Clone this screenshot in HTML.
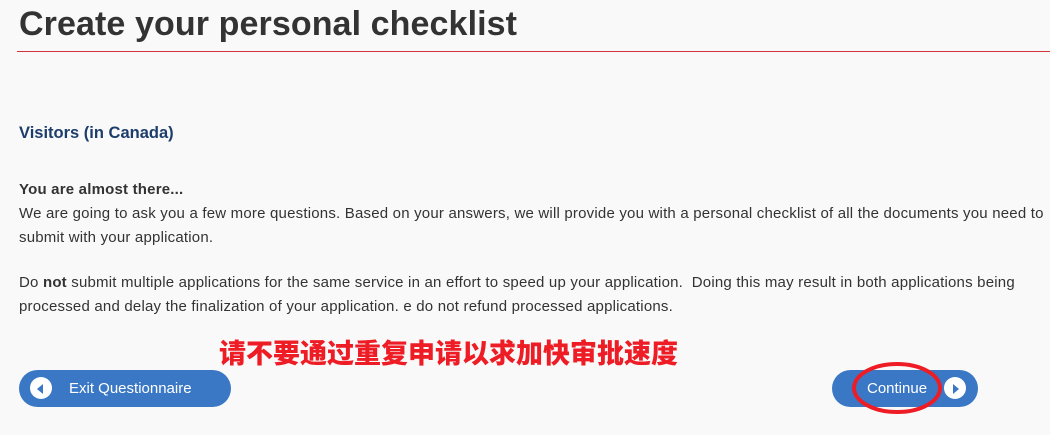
<!DOCTYPE html>
<html><head><meta charset="utf-8"><style>
body{margin:0;background:#f9f9f9;width:1050px;height:435px;overflow:hidden;font-family:"Liberation Sans",Arial,sans-serif;color:#333;position:relative}
h1{position:absolute;left:19px;top:5px;margin:0;font-size:34px;font-weight:bold;color:#333;letter-spacing:0.1px}
.rule{position:absolute;left:17px;top:51px;width:1033px;height:1px;background:#d0333b}
h2{position:absolute;left:19px;top:124px;margin:0;font-size:16.5px;color:#1c3d6b;font-weight:bold}
.p{position:absolute;left:19px;font-size:15px;line-height:24px;color:#333;width:1030px;letter-spacing:0.2px}
.cn{position:absolute;left:219px;top:333px;font-family:"Noto Sans CJK SC",sans-serif;font-weight:900;font-size:27px;color:#ee1c25;line-height:38px;white-space:nowrap}
.btn{position:absolute;top:370px;height:37px;border-radius:19px;background:#3a78c5;color:#fff;font-size:15px;line-height:37px}
.ic{position:absolute;top:7px;width:22px;height:22px;border-radius:50%;background:#fff}
</style></head><body>
<h1>Create your personal checklist</h1>
<div class="rule"></div>
<h2>Visitors (in Canada)</h2>
<div class="p" style="top:178px"><b>You are almost there...</b><br>We are going to ask you a few more questions. Based on your answers, we will provide you with a personal checklist of all the documents you need to submit with your application.</div>
<div class="p" style="top:271px">Do <b>not</b> submit multiple applications for the same service in an effort to speed up your application.&nbsp; Doing this may result in both applications being processed and delay the finalization of your application. e do not refund processed applications.</div>
<div class="cn">请不要通过重复申请以求加快审批速度</div>
<div class="btn" style="left:19px;width:212px"><div class="ic" style="left:11px"><svg width="22" height="22"><path d="M13 6 L7 11 L13 16Z" fill="#3a78c5"/></svg></div><span style="position:absolute;left:50px">Exit Questionnaire</span></div>
<div class="btn" style="left:832px;width:146px"><span style="position:absolute;left:35px">Continue</span><div class="ic" style="left:112px"><svg width="22" height="22"><path d="M9 6 L15 11 L9 16Z" fill="#3a78c5"/></svg></div></div>
<svg style="position:absolute;left:850px;top:360px" width="95" height="55"><ellipse cx="47" cy="28" rx="43" ry="24" fill="none" stroke="#ee1c25" stroke-width="4"/></svg>
</body></html>
